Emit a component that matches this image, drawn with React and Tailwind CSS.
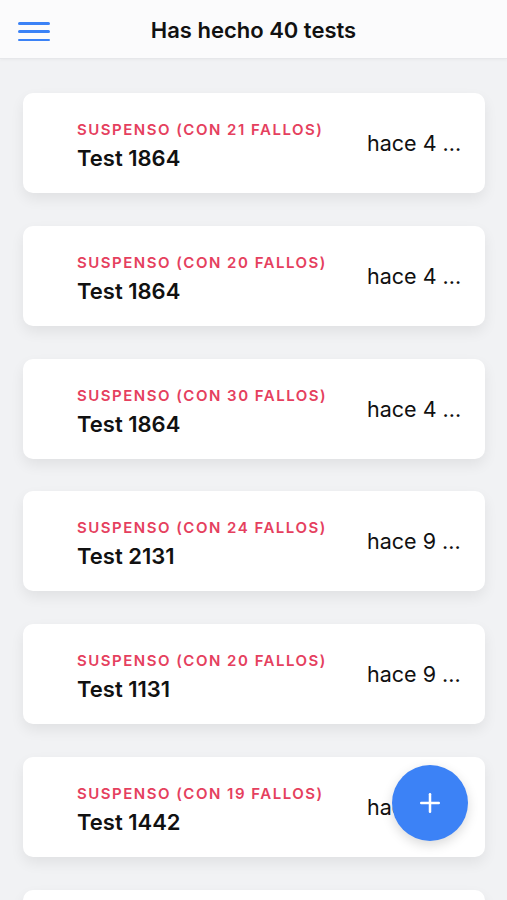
import { Plus } from "lucide-react"

const tests = [
  { fails: 21, name: "Test 1864", when: "hace 4 ..." },
  { fails: 20, name: "Test 1864", when: "hace 4 ..." },
  { fails: 30, name: "Test 1864", when: "hace 4 ..." },
  { fails: 24, name: "Test 2131", when: "hace 9 ..." },
  { fails: 20, name: "Test 1131", when: "hace 9 ..." },
  { fails: 19, name: "Test 1442", when: "hace 9 ..." },
]

export default function App() {
  return (
    <div
      className="relative h-[900px] w-[507px] overflow-hidden bg-[#f1f2f4]"
      style={{ fontFamily: "Inter, 'Noto Sans', sans-serif" }}
    >
      {/* cabecera */}
      <div className="relative flex h-[59px] items-center justify-center border-b border-[#e6e7ea] bg-[#fbfbfc] pt-[3px] shadow-[0_1px_3px_rgba(0,0,0,0.04)]">
        <button className="absolute left-[18px] top-[22px] flex h-[19px] w-[32px] flex-col justify-between">
          <span className="h-[2.5px] w-full rounded-full bg-[#3b82f6]" />
          <span className="h-[2.5px] w-full rounded-full bg-[#3b82f6]" />
          <span className="h-[2.5px] w-full rounded-full bg-[#3b82f6]" />
        </button>
        <h1 className="text-[22px] font-semibold text-[#111]">Has hecho 40 tests</h1>
      </div>

      {/* lista de tests */}
      <div className="flex flex-col gap-[32.8px] pl-[23px] pr-[22px] pt-[34px]">
        {tests.map((t, i) => (
          <div
            key={i}
            className="flex h-[100px] shrink-0 rounded-[10px] bg-white pl-[54px] pr-[22px] shadow-[0_6px_14px_rgba(0,0,0,0.07)]"
          >
            <div className="flex-1 pt-[28px]">
              <div className="whitespace-nowrap text-[15px] font-semibold uppercase leading-[18px] tracking-[1.5px] text-[#e5405e]">
                Suspenso (con {t.fails} fallos)
              </div>
              <div className="mt-[6px] text-[22px] font-semibold leading-[26px] text-[#111]">{t.name}</div>
            </div>
            <div className="w-[96px] self-center whitespace-nowrap text-[21.5px] leading-[26px] text-[#111]">{t.when}</div>
          </div>
        ))}
        <div className="h-[100px] shrink-0 rounded-[10px] bg-white shadow-[0_6px_14px_rgba(0,0,0,0.07)]" />
      </div>

      {/* botón flotante */}
      <button className="absolute left-[392px] top-[765px] flex h-[76px] w-[76px] items-center justify-center rounded-full bg-[#3c82f6] shadow-[0_4px_12px_rgba(0,0,0,0.15)]">
        <Plus className="h-[30px] w-[30px] text-white" strokeWidth={2} />
      </button>
    </div>
  )
}
